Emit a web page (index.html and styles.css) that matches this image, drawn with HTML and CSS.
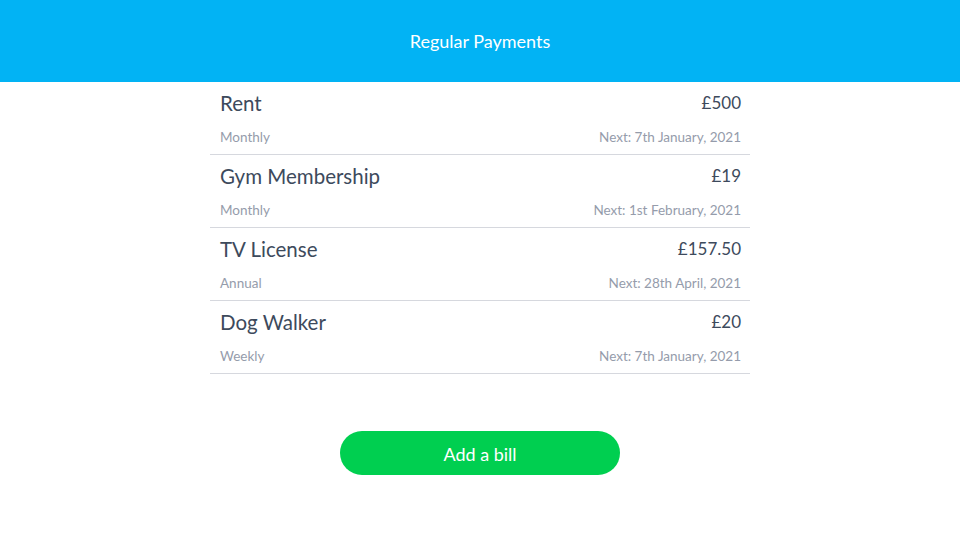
FILE: index.html
```html
<!DOCTYPE html>
<html>
<head>
<meta charset="utf-8">
<link rel="stylesheet" href="styles.css">
</head>
<body>
<header class="topbar"><h1 class="title">Regular Payments</h1></header>
<main class="content">
  <ul class="bills">
    <li class="bill">
      <div class="bill-main"><span class="bill-name">Rent</span><span class="bill-amount">£500</span></div>
      <div class="bill-meta"><span>Monthly</span><span>Next: 7th January, 2021</span></div>
    </li>
    <li class="bill">
      <div class="bill-main"><span class="bill-name">Gym Membership</span><span class="bill-amount">£19</span></div>
      <div class="bill-meta"><span>Monthly</span><span>Next: 1st February, 2021</span></div>
    </li>
    <li class="bill">
      <div class="bill-main"><span class="bill-name">TV License</span><span class="bill-amount">£157.50</span></div>
      <div class="bill-meta"><span>Annual</span><span>Next: 28th April, 2021</span></div>
    </li>
    <li class="bill">
      <div class="bill-main"><span class="bill-name">Dog Walker</span><span class="bill-amount">£20</span></div>
      <div class="bill-meta"><span>Weekly</span><span>Next: 7th January, 2021</span></div>
    </li>
  </ul>
  <button class="add-btn">Add a bill</button>
</main>
</body>
</html>
```
FILE: styles.css
```css
* { box-sizing: border-box; }
html, body { margin: 0; padding: 0; }
body {
  font-family: Lato, "Open Sans", sans-serif;
  background: #ffffff;
  width: 960px;
  height: 540px;
  overflow: hidden;
}
.topbar {
  height: 82px;
  background: #02b3f4;
  display: flex;
  align-items: center;
  justify-content: center;
}
.title {
  margin: 0;
  color: #ffffff;
  font-size: 18px;
  font-weight: 400;
  line-height: 24px;
  padding-bottom: 1px;
}
.content {
  display: flex;
  flex-direction: column;
  align-items: center;
}
.bills {
  list-style: none;
  margin: 0;
  padding: 0;
  width: 540px;
}
.bill {
  height: 73px;
  border-bottom: 1px solid #d6d8de;
  padding: 9px 9px 0 10px;
}
.bill-main {
  display: flex;
  justify-content: space-between;
  align-items: center;
  height: 24px;
}
.bill-name {
  font-size: 20.5px;
  color: #3d4a5c;
}
.bill-amount {
  font-size: 17px;
  color: #3d4a5c;
  margin-top: -2px;
}
.bill-meta {
  display: flex;
  justify-content: space-between;
  align-items: center;
  margin-top: 12px;
  height: 20px;
  font-size: 13.5px;
  color: #959cab;
}
.add-btn {
  margin-top: 57px;
  width: 280px;
  height: 44px;
  border: none;
  border-radius: 22px;
  background: #00cf50;
  color: #ffffff;
  font-family: inherit;
  font-size: 18px;
  padding: 1px 0 0;
}
```
